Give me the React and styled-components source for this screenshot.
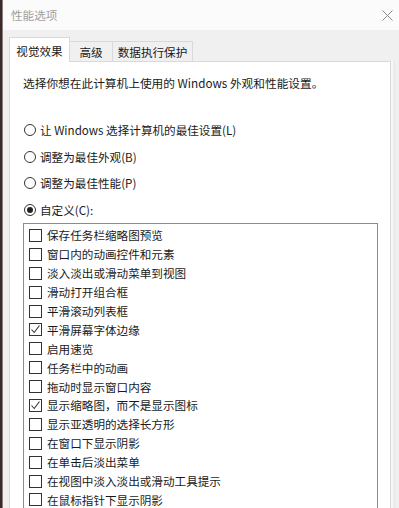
import React from "react";
import styled, { createGlobalStyle } from "styled-components";

const Global = createGlobalStyle`
  html, body { margin: 0; padding: 0; background: #f0f0f0; }
  * { box-sizing: border-box; }
  body { font-family: "Noto Sans CJK SC", "Noto Sans", sans-serif; }
`;

const Screen = styled.div`
  width: 399px;
  height: 508px;
  overflow: hidden;
  display: flex;
  background: #f0f0f0;
`;

const DarkEdge = styled.div`
  width: 3px;
  flex: none;
  background: #3a2a2c;
  border-right: 1px solid #8a8080;
`;

const Dialog = styled.div`
  flex: 1;
  display: flex;
  flex-direction: column;
  min-width: 0;
`;

const TitleBar = styled.div`
  height: 30px;
  flex: none;
  display: flex;
  align-items: center;
  justify-content: space-between;
  padding: 0 6px 0 8px;
  background: #fbfbfb;
`;

const Title = styled.span`
  font-size: 11.6px;
  color: #a0a0a0;
`;

const Body = styled.div`
  flex: 1;
  display: flex;
  flex-direction: column;
  padding: 8px 0 0 6px;
`;

const Tabs = styled.div`
  display: flex;
  align-items: flex-end;
  height: 24px;
  position: relative;
  z-index: 1;
  margin-bottom: -1px;
`;

const Tab = styled.div`
  height: ${(p) => (p.$active ? "25px" : "21px")};
  width: ${(p) => p.$w}px;
  display: flex;
  align-items: center;
  justify-content: center;
  font-size: 11.6px;
  color: #1a1a1a;
  background: ${(p) => (p.$active ? "#ffffff" : "#f0f0f0")};
  border: 1px solid #d9d9d9;
  border-bottom: ${(p) => (p.$active ? "none" : "1px solid #d9d9d9")};
  border-left: ${(p) => (p.$first || p.$active ? "1px solid #d9d9d9" : "none")};
  padding-top: ${(p) => (p.$active ? "2px" : "0")};
`;

const Row = styled.div`
  flex: 1;
  display: flex;
`;

const Panel = styled.div`
  width: 382px;
  flex: none;
  background: #ffffff;
  border: 1px solid #d9d9d9;
  border-bottom: none;
  padding: 13px 0 0 14px;
  display: flex;
  flex-direction: column;
`;

const Gutter = styled.div`
  flex: 1;
  background: #f0f0f0;
  border-left: 2px solid #f6f6f6;
  position: relative;
  &::after {
    content: "";
    position: absolute;
    left: 1px;
    top: 0;
    bottom: 0;
    width: 1px;
    background: #e6e6e6;
  }
`;

const Desc = styled.div`
  font-size: 11.7px;
  line-height: 16px;
  color: #1a1a1a;
  height: 16px;
  margin-bottom: 26px;
  margin-left: -1px;
  white-space: nowrap;
`;

const RadioRow = styled.div`
  display: flex;
  align-items: center;
  height: 26.5px;
  font-size: 11.6px;
  color: #1a1a1a;
  white-space: nowrap;
`;

const RadioCircle = styled.span`
  width: 12px;
  height: 12px;
  border-radius: 50%;
  border: 1px solid #333;
  margin-right: 4px;
  flex: none;
  display: flex;
  align-items: center;
  justify-content: center;
  background: #fff;
  &::after {
    content: "";
    width: 6px;
    height: 6px;
    border-radius: 50%;
    background: ${(p) => (p.$on ? "#222" : "transparent")};
  }
`;

const ListBox = styled.div`
  width: 355px;
  flex: 1;
  margin-left: -1px;
  border: 1px solid #8c8c8c;
  border-bottom: none;
  padding: 2px 0 0 5px;
  background: #fff;
`;

const CheckRow = styled.div`
  display: flex;
  align-items: center;
  height: 18.9px;
  font-size: 11.6px;
  color: #1a1a1a;
  white-space: nowrap;
`;

const CheckBox = styled.span`
  width: 13px;
  height: 13px;
  border: 1px solid #333;
  flex: none;
  margin-right: 5px;
  display: flex;
  align-items: center;
  justify-content: center;
  background: #fff;
`;

const Close = () => (
  <svg width="11" height="11" viewBox="0 0 11 11">
    <path d="M0.5 0.5 L10.5 10.5 M10.5 0.5 L0.5 10.5" stroke="#8a8a8a" strokeWidth="1" fill="none" />
  </svg>
);

const Tick = () => (
  <svg width="11" height="11" viewBox="0 0 11 11">
    <path d="M1.5 5.5 L4.2 8.5 L9.5 1.5" stroke="#333" strokeWidth="1.1" fill="none" />
  </svg>
);

const radios = [
  { t: "让 Windows 选择计算机的最佳设置(L)" },
  { t: "调整为最佳外观(B)" },
  { t: "调整为最佳性能(P)" },
  { t: "自定义(C):", on: true },
];

const checks = [
  ["保存任务栏缩略图预览", false],
  ["窗口内的动画控件和元素", false],
  ["淡入淡出或滑动菜单到视图", false],
  ["滑动打开组合框", false],
  ["平滑滚动列表框", false],
  ["平滑屏幕字体边缘", true],
  ["启用速览", false],
  ["任务栏中的动画", false],
  ["拖动时显示窗口内容", false],
  ["显示缩略图，而不是显示图标", true],
  ["显示亚透明的选择长方形", false],
  ["在窗口下显示阴影", false],
  ["在单击后淡出菜单", false],
  ["在视图中淡入淡出或滑动工具提示", false],
  ["在鼠标指针下显示阴影", false],
];

export default function App() {
  return (
    <>
      <Global />
      <Screen>
        <DarkEdge />
        <Dialog>
          <TitleBar>
            <Title>性能选项</Title>
            <Close />
          </TitleBar>
          <Body>
            <Tabs>
              <Tab $active $first $w={61}>视觉效果</Tab>
              <Tab $w={43}>高级</Tab>
              <Tab $w={80}>数据执行保护</Tab>
            </Tabs>
            <Row>
              <Panel>
                <Desc>选择你想在此计算机上使用的 Windows 外观和性能设置。</Desc>
                {radios.map((r) => (
                  <RadioRow key={r.t}>
                    <RadioCircle $on={r.on} />
                    {r.t}
                  </RadioRow>
                ))}
                <ListBox>
                  {checks.map(([t, on]) => (
                    <CheckRow key={t}>
                      <CheckBox>{on && <Tick />}</CheckBox>
                      {t}
                    </CheckRow>
                  ))}
                </ListBox>
              </Panel>
              <Gutter />
            </Row>
          </Body>
        </Dialog>
      </Screen>
    </>
  );
}
